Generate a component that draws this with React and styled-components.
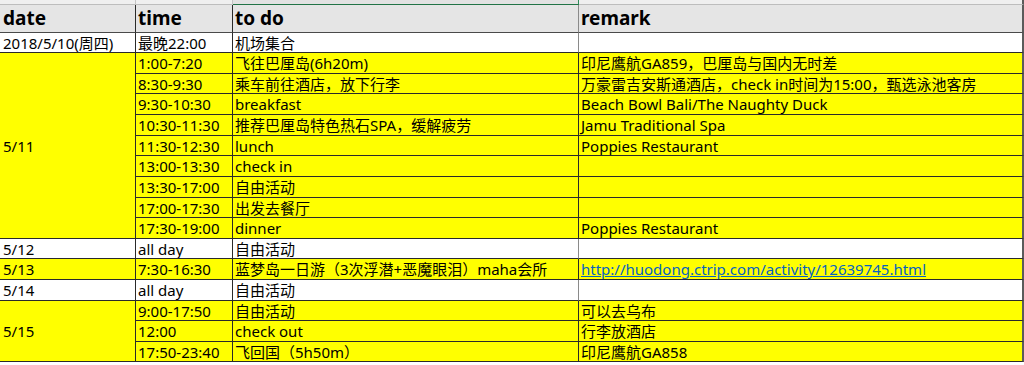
import React from "react";
import styled, { createGlobalStyle, css } from "styled-components";

const Global = createGlobalStyle`
  html, body { margin: 0; padding: 0; background: #ffffff; }
  body {
    font-family: "Noto Sans", "Noto Sans CJK SC", sans-serif;
    color: #000;
  }
`;

const Sheet = styled.div`
  display: grid;
  width: 1024px;
  grid-template-columns: 136px 97px 346px 445px;
  grid-template-rows:
    5px 28px 20px
    21px 20px 21px 21px 20px 21px 21px 20px 21px
    20px 21px 21px
    20px 21px 20px;
`;

const ColHead = styled.div`
  box-sizing: border-box;
  background: ${(p) => (p.$selected ? "#e2e2e2" : "#efefef")};
  border-right: 1px solid ${(p) => (p.$selected ? "#2e8b57" : "#c4c4c4")};
  border-bottom: 1px solid ${(p) => (p.$selected ? "#217346" : "#bdbdbd")};
  ${(p) => p.$last && css`border-right: 2px solid #5b5b5b;`}
`;

const bgMap = {
  header: "#e5e5e5",
  yellow: "#ffff00",
  white: "#ffffff",
};

const Cell = styled.div`
  box-sizing: border-box;
  min-width: 0;
  display: flex;
  align-items: center;
  padding: 0 2px;
  background: ${(p) => bgMap[p.$bg] || "#fff"};
  border-bottom: 1px solid #2a2a2a;
  border-right: 1px solid ${(p) => p.$edge || "#2a2a2a"};
  font-size: 15px;
  line-height: 20px;
  white-space: nowrap;
  overflow: hidden;
  ${(p) => p.$span && css`grid-row: span ${p.$span};`}
`;

const DateCell = styled(Cell)`
  padding-left: 3px;
`;

const RemarkCell = styled(Cell)`
  border-right: 2px solid #5b5b5b;
`;

const HeadCell = styled(Cell)`
  font-size: 19px;
  font-weight: 700;
  line-height: 27px;
  align-items: flex-start;
  border-bottom-color: #4a4a4a;
`;

const HeadDate = styled(HeadCell)`
  padding-left: 3px;
`;

const HeadRemark = styled(HeadCell)`
  border-right: 2px solid #5b5b5b;
`;

const Link = styled.a`
  color: #0563c1;
  text-decoration: underline;
  text-underline-offset: 1px;
`;

const groups = [
  {
    date: "2018/5/10(周四)",
    bg: "white",
    items: [{ time: "最晚22:00", todo: "机场集合", remark: "" }],
  },
  {
    date: "5/11",
    bg: "yellow",
    items: [
      { time: "1:00-7:20", todo: "飞往巴厘岛(6h20m)", remark: "印尼鹰航GA859，巴厘岛与国内无时差" },
      { time: "8:30-9:30", todo: "乘车前往酒店，放下行李", remark: "万豪雷吉安斯通酒店，check in时间为15:00，甄选泳池客房" },
      { time: "9:30-10:30", todo: "breakfast", remark: "Beach Bowl Bali/The Naughty Duck" },
      { time: "10:30-11:30", todo: "推荐巴厘岛特色热石SPA，缓解疲劳", remark: "Jamu Traditional Spa" },
      { time: "11:30-12:30", todo: "lunch", remark: "Poppies Restaurant" },
      { time: "13:00-13:30", todo: "check in", remark: "" },
      { time: "13:30-17:00", todo: "自由活动", remark: "" },
      { time: "17:00-17:30", todo: "出发去餐厅", remark: "" },
      { time: "17:30-19:00", todo: "dinner", remark: "Poppies Restaurant" },
    ],
  },
  {
    date: "5/12",
    bg: "white",
    items: [{ time: "all day", todo: "自由活动", remark: "" }],
  },
  {
    date: "5/13",
    bg: "yellow",
    items: [
      {
        time: "7:30-16:30",
        todo: "蓝梦岛一日游（3次浮潜+恶魔眼泪）maha会所",
        remark: "http://huodong.ctrip.com/activity/12639745.html",
        link: true,
      },
    ],
  },
  {
    date: "5/14",
    bg: "white",
    items: [{ time: "all day", todo: "自由活动", remark: "" }],
  },
  {
    date: "5/15",
    bg: "yellow",
    items: [
      { time: "9:00-17:50", todo: "自由活动", remark: "可以去乌布" },
      { time: "12:00", todo: "check out", remark: "行李放酒店" },
      { time: "17:50-23:40", todo: "飞回国（5h50m）", remark: "印尼鹰航GA858" },
    ],
  },
];

export default function App() {
  return (
    <>
      <Global />
      <Sheet>
        <ColHead />
        <ColHead />
        <ColHead $selected />
        <ColHead $last />

        <HeadDate $bg="header">date</HeadDate>
        <HeadCell $bg="header">time</HeadCell>
        <HeadCell $bg="header" $edge="#8a8a8a">to do</HeadCell>
        <HeadRemark $bg="header">remark</HeadRemark>

        {groups.map((g) => (
          <React.Fragment key={g.date}>
            <DateCell $bg={g.bg} $span={g.items.length > 1 ? g.items.length : undefined}>
              {g.date}
            </DateCell>
            {g.items.map((it, i) => (
              <React.Fragment key={i}>
                <Cell $bg={g.bg}>{it.time}</Cell>
                <Cell $bg={g.bg} $edge={g.bg === "white" ? "#8a8a8a" : undefined}>
                  {it.todo}
                </Cell>
                <RemarkCell $bg={g.bg}>
                  {it.link ? <Link href={it.remark}>{it.remark}</Link> : it.remark}
                </RemarkCell>
              </React.Fragment>
            ))}
          </React.Fragment>
        ))}
      </Sheet>
    </>
  );
}
